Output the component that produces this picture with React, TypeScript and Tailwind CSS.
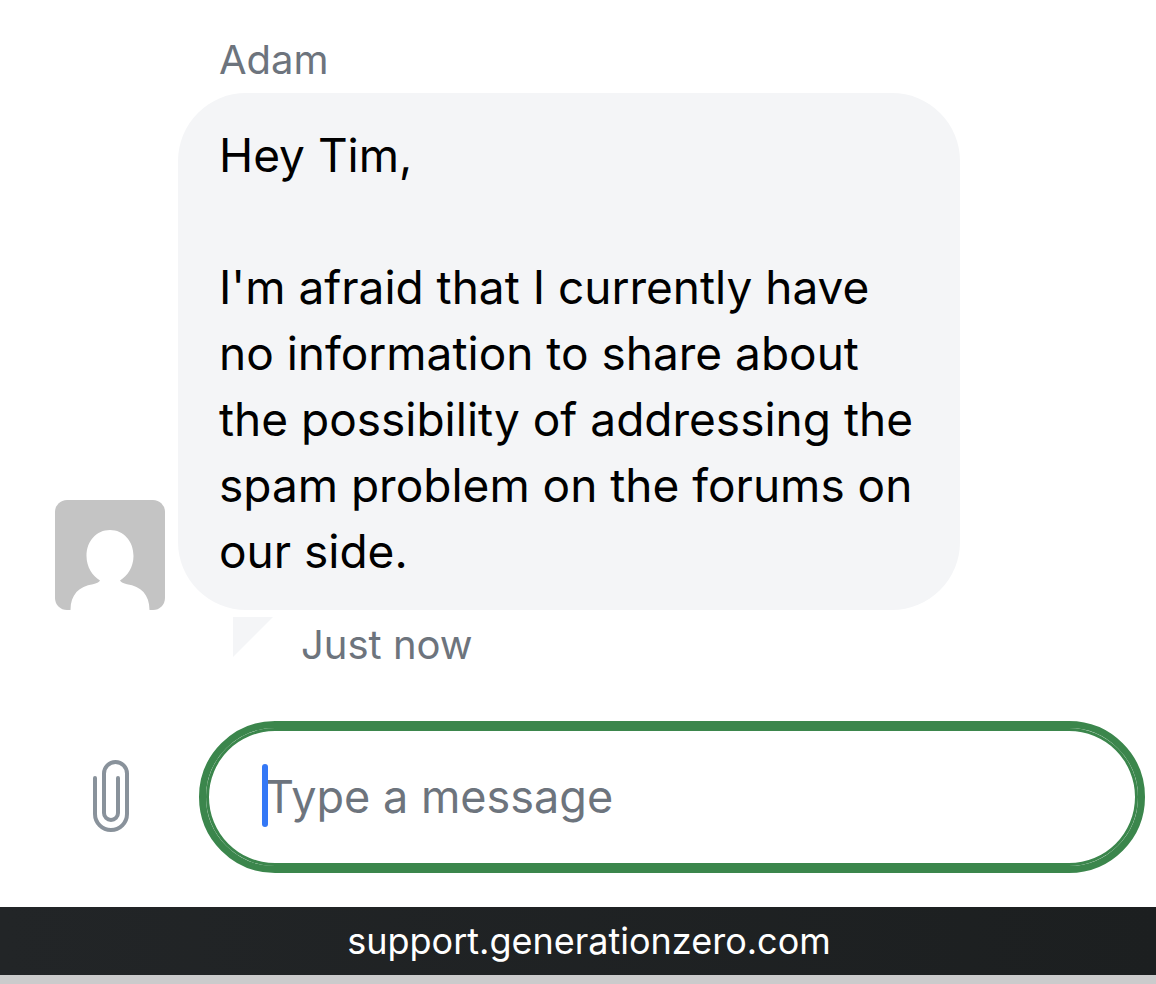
import React, { useState } from "react";

function Avatar() {
  return (
    <svg viewBox="0 0 110 110" className="size-[110px] shrink-0 rounded-xl bg-[#c4c4c4]" role="img" aria-label="Adam">
      <path
        fill="#fff"
        d="M55 30c13.500 0 23.500 11 23.500 26 0 11-6 20-13.500 24.500 1 1.800 3.500 3 7 3.800C86 86 94.500 95 94.500 110h-79C15.500 95 24 86 38 84.300c3.500-.8 6-2 7-3.800C37.500 76 31.500 67 31.500 56 31.500 41 41.500 30 55 30z"
      />
    </svg>
  );
}

function Paperclip() {
  return (
    <svg viewBox="0 0 36 72" className="h-[72px] w-9" fill="none" stroke="#89929b" strokeWidth="4" strokeLinecap="round" aria-hidden="true">
      <path d="M2 18V54a16 16 0 0 0 32 0V13.500a11.500 11.500 0 0 0-23 0V53a7 7 0 0 0 14 0V18" />
    </svg>
  );
}

function Message() {
  return (
    <article>
      <p className="mb-[9px] pl-[219px] text-[40px] leading-[48px] text-[#6d747d]">Adam</p>
      <div className="flex items-end gap-[13px] pr-12 pl-[55px]">
        <Avatar />
        <div className="max-w-[782px] rounded-[68px] bg-[#f4f5f7] pt-[29px] pr-[38px] pb-[26px] pl-[41px] text-[46px] leading-[66px] text-black">
          <p className="mb-[66px]">Hey Tim,</p>
          <p>
            I'm afraid that I currently have no information to share about the possibility of addressing the spam problem on the forums on our side.
          </p>
        </div>
      </div>
      <div className="mt-[7px] flex items-start gap-7 pl-[233px]">
        <svg viewBox="0 0 40 40" className="size-10" aria-hidden="true">
          <path d="M0 0H40L0 40z" fill="#f4f5f7" />
        </svg>
        <time className="pt-1 text-[40px] leading-[48px] text-[#6d747d]">Just now</time>
      </div>
    </article>
  );
}

function Composer() {
  const [text, setText] = useState("");
  return (
    <form className="mt-[52px] flex items-center pr-[11px]" onSubmit={(e) => e.preventDefault()}>
      <button type="button" aria-label="Attach a file" className="flex w-[199px] shrink-0 justify-center pr-0.5 pb-0.5 pl-6">
        <Paperclip />
      </button>
      <div className="relative min-w-0 grow">
        <input
          type="text"
          aria-label="Type a message"
          placeholder="Type a message"
          value={text}
          onChange={(e) => setText(e.target.value)}
          className="block h-[152px] w-full rounded-full border-[7px] border-[#3b864c] bg-white px-[59px] pb-0.5 text-[45px] text-black caret-[#3478f6] shadow-[inset_0_0_0_3px_#3b864c] outline-none placeholder:text-[#6d747d] placeholder:opacity-100"
        />
        {text === "" && <span className="pointer-events-none absolute top-[43px] left-[63px] h-[63px] w-[6px] rounded-full bg-[#3478f6]" />}
      </div>
    </form>
  );
}

export default function App() {
  return (
    <div className="flex min-h-screen flex-col bg-white font-['Inter',sans-serif]">
      <main className="grow pt-9">
        <Message />
        <Composer />
      </main>
      <footer className="border-b-[9px] border-[#cbcbcc] bg-gradient-to-r from-[#222527] to-[#1c1f20] pl-[22px] text-center text-[36px] leading-[68px] text-white">
        support.generationzero.com
      </footer>
    </div>
  );
}
